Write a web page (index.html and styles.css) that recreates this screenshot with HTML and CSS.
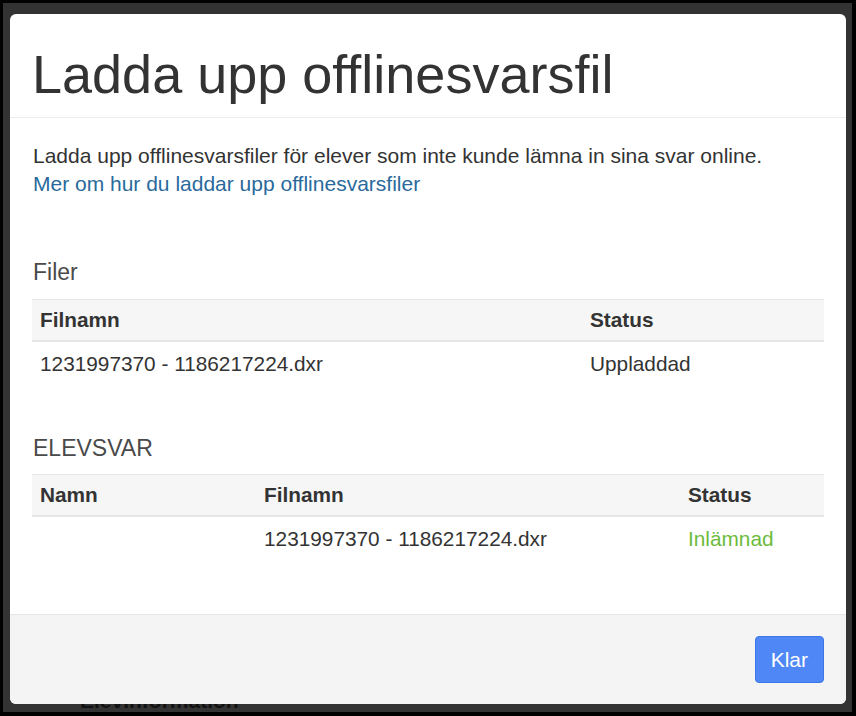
FILE: index.html
```html
<!DOCTYPE html>
<html lang="sv">
<head>
  <meta charset="UTF-8">
  <meta name="viewport" content="width=device-width, initial-scale=1.0">
  <title>Ladda upp offlinesvarsfil</title>
  <link rel="stylesheet" href="styles.css">
</head>
<body>
  <div class="screen">
    <!-- page behind the dialog, dimmed by the backdrop -->
    <div class="behind">Elevinformation</div>

    <div class="modal">
      <div class="modal-header">
        <h1 class="modal-title">Ladda upp offlinesvarsfil</h1>
      </div>

      <div class="modal-body">
        <p class="intro">
          Ladda upp offlinesvarsfiler för elever som inte kunde lämna in sina svar online.<br>
          <a href="#" class="help-link">Mer om hur du laddar upp offlinesvarsfiler</a>
        </p>

        <h3 class="section-title">Filer</h3>
        <table class="table">
          <colgroup>
            <col class="col-file-wide">
            <col>
          </colgroup>
          <thead>
            <tr>
              <th>Filnamn</th>
              <th>Status</th>
            </tr>
          </thead>
          <tbody>
            <tr>
              <td>1231997370 - 1186217224.dxr</td>
              <td>Uppladdad</td>
            </tr>
          </tbody>
        </table>

        <h3 class="section-title">ELEVSVAR</h3>
        <table class="table">
          <colgroup>
            <col class="col-name">
            <col class="col-file">
            <col>
          </colgroup>
          <thead>
            <tr>
              <th>Namn</th>
              <th>Filnamn</th>
              <th>Status</th>
            </tr>
          </thead>
          <tbody>
            <tr>
              <td></td>
              <td>1231997370 - 1186217224.dxr</td>
              <td class="status-ok">Inlämnad</td>
            </tr>
          </tbody>
        </table>
      </div>

      <div class="modal-footer">
        <button class="btn btn-primary">Klar</button>
      </div>
    </div>
  </div>
</body>
</html>
```

FILE: styles.css
```css
html, body {
  margin: 0;
  height: 100%;
}
body {
  background: #000;
  font-family: "Liberation Sans", Arial, sans-serif;
  color: #333;
  overflow: hidden;
}
.screen {
  position: relative;
  margin: 3px 4px 0 3px;
  height: 709px;
  padding: 11px 6px 0 7px;
  background: #333;
  box-sizing: border-box;
  overflow: hidden;
}
.behind {
  position: absolute;
  left: 77px;
  top: 686px;
  font-size: 21px;
  font-weight: bold;
  color: #111;
}
.modal {
  position: relative;
  z-index: 1;
  background: #fff;
  border-radius: 6px;
  overflow: hidden;
  height: 690px;
  display: flex;
  flex-direction: column;
}
.modal-header {
  padding: 31px 20px 13px 22px;
  border-bottom: 1px solid #ececec;
}
.modal-title {
  margin: 0;
  font-size: 54px;
  font-weight: normal;
  line-height: 1.1;
  color: #333;
}
.modal-body {
  flex: 1;
  padding: 24px 22px 0;
}
.intro {
  margin: 0 0 62px;
  font-size: 21px;
  line-height: 28px;
  padding-left: 1px;
}
.help-link {
  color: #2a6a9c;
  text-decoration: none;
}
.section-title {
  margin: 52px 0 13px;
  font-size: 23px;
  font-weight: normal;
  line-height: 1.1;
  color: #4a4a4a;
  padding-left: 1px;
}
.table {
  width: 100%;
  border-collapse: collapse;
  margin-bottom: 20px;
  font-size: 20.8px;
  line-height: 28px;
}
.table th {
  text-align: left;
  font-weight: bold;
  background: #f6f6f6;
  border-top: 1px solid #e6e6e6;
  border-bottom: 2px solid #e6e6e6;
  padding: 6px 8px;
}
.table td {
  padding: 8px 8px 6px;
}
.col-file-wide {
  width: 550px;
}
.col-name {
  width: 224px;
}
.col-file {
  width: 424px;
}
.status-ok {
  color: #6cbb3c;
}
.modal-footer {
  height: 90px;
  box-sizing: border-box;
  padding: 21px 22px 0;
  border-top: 1px solid #e5e5e5;
  background: #f4f4f4;
  display: flex;
  justify-content: flex-end;
  align-items: flex-start;
}
.btn {
  font-family: inherit;
  font-size: 21px;
  line-height: 27px;
  padding: 9px 15px;
  border-radius: 4px;
  cursor: pointer;
}
.btn-primary {
  background: #4f88f6;
  border: 1px solid #3d76e6;
  color: #fff;
}
```
